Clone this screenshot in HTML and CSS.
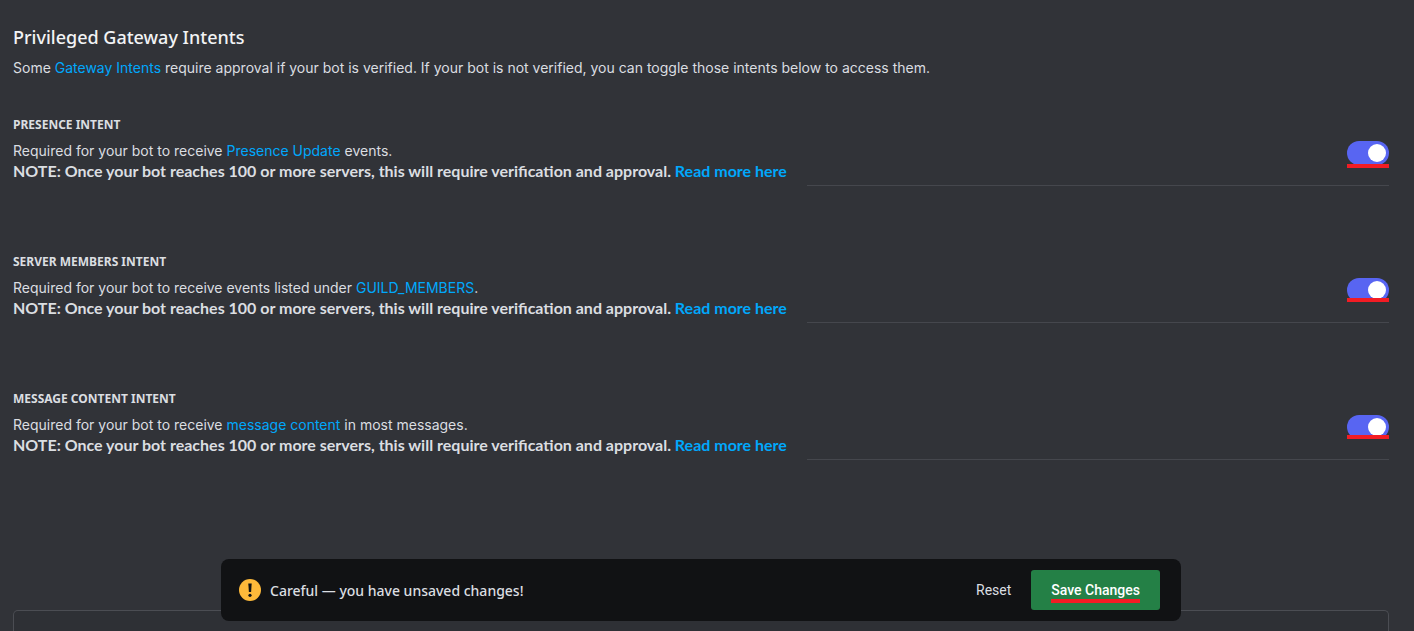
FILE: index.html
```
<!DOCTYPE html>
<html lang="en">
<head>
  <meta charset="UTF-8">
  <meta name="viewport" content="width=device-width, initial-scale=1">
  <title>Privileged Gateway Intents</title>
  <link rel="stylesheet" href="styles.css">
</head>
<body>

  <main class="page">
    <h1 class="title">Privileged Gateway Intents</h1>
    <p class="text">Some <a href="#">Gateway Intents</a> require approval if your bot is verified. If your bot is not verified, you can toggle those intents below to access them.</p>

    <!-- Intents -->
    <div class="intents">
      <section class="intent">
        <div class="intent-info">
          <h2 class="intent-name"><label for="presence">Presence Intent</label></h2>
          <p class="text">Required for your bot to receive <a href="#">Presence Update</a> events.</p>
          <p class="note">NOTE: Once your bot reaches 100 or more servers, this will require verification and approval. <a href="#">Read more here</a></p>
        </div>
        <div class="intent-control">
          <span class="switch mark mark-low"><input type="checkbox" id="presence" checked></span>
        </div>
      </section>

      <section class="intent">
        <div class="intent-info">
          <h2 class="intent-name"><label for="members">Server Members Intent</label></h2>
          <p class="text">Required for your bot to receive events listed under <a href="#">GUILD_MEMBERS</a>.</p>
          <p class="note">NOTE: Once your bot reaches 100 or more servers, this will require verification and approval. <a href="#">Read more here</a></p>
        </div>
        <div class="intent-control">
          <span class="switch mark"><input type="checkbox" id="members" checked></span>
        </div>
      </section>

      <section class="intent">
        <div class="intent-info">
          <h2 class="intent-name"><label for="content">Message Content Intent</label></h2>
          <p class="text">Required for your bot to receive <a href="#">message content</a> in most messages.</p>
          <p class="note">NOTE: Once your bot reaches 100 or more servers, this will require verification and approval. <a href="#">Read more here</a></p>
        </div>
        <div class="intent-control">
          <span class="switch mark"><input type="checkbox" id="content" checked></span>
        </div>
      </section>
    </div>

    <div class="panel"></div>
  </main>

  <!-- Unsaved changes -->
  <div class="notice-wrap">
    <div class="notice">
      <svg class="notice-icon" viewBox="0 0 22 22" aria-hidden="true">
        <circle cx="11" cy="11" r="11" fill="#fdb93a"/>
        <path d="M9.3 4.5h3.4l-.6 8.6H9.9z" fill="#111214"/>
        <circle cx="11" cy="16.3" r="1.6" fill="#111214"/>
      </svg>
      <span class="notice-text">Careful — you have unsaved changes!</span>
      <button class="reset" type="button">Reset</button>
      <button class="save" type="button"><span class="mark">Save Changes</span></button>
    </div>
  </div>

</body>
</html>
```

FILE: styles.css
```
* { margin: 0; padding: 0; box-sizing: border-box; }

body {
  font-family: "Noto Sans", sans-serif;
  background-color: #313338;
  color: #dbdee1;
}

a {
  color: #00a8fc;
  text-decoration: none;
}

.page {
  display: flex;
  flex-direction: column;
  min-height: 100vh;
  padding: 25px 25px 0 13px;
}

.title {
  font-size: 18px;
  line-height: 24px;
  font-weight: 500;
  color: #f2f3f5;
  margin-bottom: 9px;
}

.text {
  font-family: Inter, "Noto Sans", sans-serif;
  font-size: 14px;
  line-height: 20px;
}

.note {
  font-family: Lato, "Noto Sans", sans-serif;
  font-size: 16px;
  line-height: 20px;
  font-weight: 700;
}

/* Intents */
.intents {
  display: flex;
  flex-direction: column;
  gap: 68px;
  margin-top: 39px;
}

.intent {
  display: flex;
  gap: 20px;
}

.intent-info {
  padding-bottom: 5px;
}

.intent-name {
  font-size: 12px;
  line-height: 16px;
  font-weight: 700;
  text-transform: uppercase;
  margin-bottom: 8px;
}

.intent-control {
  flex: 1;
  display: flex;
  justify-content: flex-end;
  align-items: flex-start;
  padding-top: 24px;
  border-bottom: 1px solid #45474d;
}

.switch {
  display: flex;
}

.switch input {
  appearance: none;
  display: flex;
  align-items: center;
  width: 42px;
  height: 24px;
  padding: 3px;
  border-radius: 12px;
  background-color: #80848e;
  cursor: pointer;
}

.switch input::before {
  content: "";
  width: 18px;
  height: 18px;
  border-radius: 50%;
  background-color: #fff;
}

.switch input:checked {
  justify-content: flex-end;
  background-color: #5865f2;
}

/* Red underline */
.mark {
  position: relative;
}

.mark::after {
  content: "";
  position: absolute;
  left: 0;
  right: 0;
  bottom: 0;
  height: 4px;
  background-color: #f21c24;
}

.mark-low::after {
  bottom: -3px;
}

.panel {
  flex: 1;
  margin-top: 150px;
  border: 1px solid #4b4d53;
  border-bottom: none;
  border-radius: 5px 5px 0 0;
  background-color: #2e3035;
}

/* Unsaved changes bar */
.notice-wrap {
  position: fixed;
  left: 0;
  right: 0;
  bottom: 10px;
  padding: 0 25px 0 13px;
}

.notice {
  display: flex;
  align-items: center;
  max-width: 960px;
  height: 62px;
  margin: 0 auto;
  padding: 0 21px 0 18px;
  border-radius: 8px;
  background-color: #111214;
}

.notice-icon {
  width: 22px;
  height: 22px;
  margin-right: 9px;
}

.notice-text {
  font-size: 14px;
  font-weight: 500;
  flex: 1;
}

.reset, .save {
  border: none;
  font-family: Roboto, "Noto Sans", sans-serif;
  font-size: 14px;
  line-height: 20px;
  font-weight: 500;
  color: #fff;
  background: none;
  cursor: pointer;
}

.reset {
  font-weight: 400;
  color: #dbdee1;
  padding: 0 20px;
}

.save {
  height: 40px;
  padding: 0 20px;
  border-radius: 3px;
  background-color: #248046;
}

.save .mark::after {
  bottom: -5px;
}
```
